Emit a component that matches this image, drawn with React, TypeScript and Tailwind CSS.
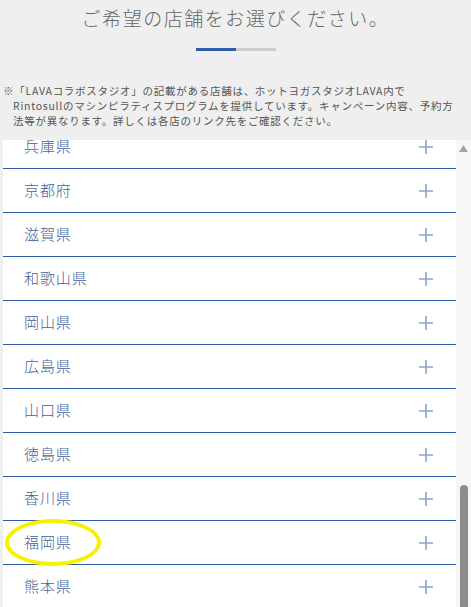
import React from 'react';

const prefectures: string[] = [
  '兵庫県',
  '京都府',
  '滋賀県',
  '和歌山県',
  '岡山県',
  '広島県',
  '山口県',
  '徳島県',
  '香川県',
  '福岡県',
  '熊本県',
];

const PlusIcon: React.FC = () => (
  <svg width="14" height="14" viewBox="0 0 14 14" className="shrink-0">
    <path d="M7 0v14M0 7h14" stroke="#8ba3cf" strokeWidth="1.6" fill="none" />
  </svg>
);

const PrefRow: React.FC<{ name: string; marked?: boolean }> = ({ name, marked }) => (
  <div className="relative h-[44px] border-b border-[#2d5ba6] flex items-center justify-between pl-[21px] pr-[23px]">
    <span className="text-[15px] tracking-[0.06em] font-light text-[#46619a]">{name}</span>
    <PlusIcon />
    {marked && (
      <div className="absolute left-[2px] top-[-2px] w-[96px] h-[47px] rounded-[50%] border-[4px] border-[#f7f000]" />
    )}
  </div>
);

export default function App() {
  return (
    <div className="w-full h-[607px] overflow-hidden bg-[#efefef] flex flex-col font-['Noto_Sans_CJK_JP','Noto_Sans',sans-serif]">
      <div className="h-[140px] shrink-0 flex flex-col">
        <h1 className="pt-[4px] text-center text-[19px] leading-[28px] tracking-[0.08em] font-light text-[#666]">
          ご希望の店舗をお選びください。
        </h1>
        <div className="mt-[16px] mx-auto w-[80px] h-[3px] flex">
          <div className="w-1/2 bg-[#2d5ba6]" />
          <div className="w-1/2 bg-[#cccccc]" />
        </div>
        <p className="mt-[32px] pl-[13px] -indent-[10px] text-[10.5px] leading-[15px] tracking-[0.07em] text-[#555] whitespace-nowrap">
          ※「LAVAコラボスタジオ」の記載がある店舗は、ホットヨガスタジオLAVA内で
          <br />
          Rintosullのマシンピラティスプログラムを提供しています。キャンペーン内容、予約方
          <br />
          法等が異なります。詳しくは各店のリンク先をご確認ください。
        </p>
      </div>

      <div className="flex-1 min-h-0 flex pl-[3px]">
        <div className="flex-1 bg-white overflow-hidden">
          <div className="mt-[-15px]">
            {prefectures.map((p) => (
              <PrefRow key={p} name={p} marked={p === '福岡県'} />
            ))}
          </div>
        </div>
        <div className="w-[15px] shrink-0 bg-[#f7f7f7] flex flex-col items-center overflow-hidden">
          <svg width="9" height="7" viewBox="0 0 9 7" className="mt-[5px] shrink-0">
            <path d="M4.5 0L9 7H0z" fill="#a3a3a3" />
          </svg>
          <div className="mt-[333px] w-[8px] h-[200px] shrink-0 rounded-t-full bg-[#8d8d8d]" />
        </div>
      </div>
    </div>
  );
}
